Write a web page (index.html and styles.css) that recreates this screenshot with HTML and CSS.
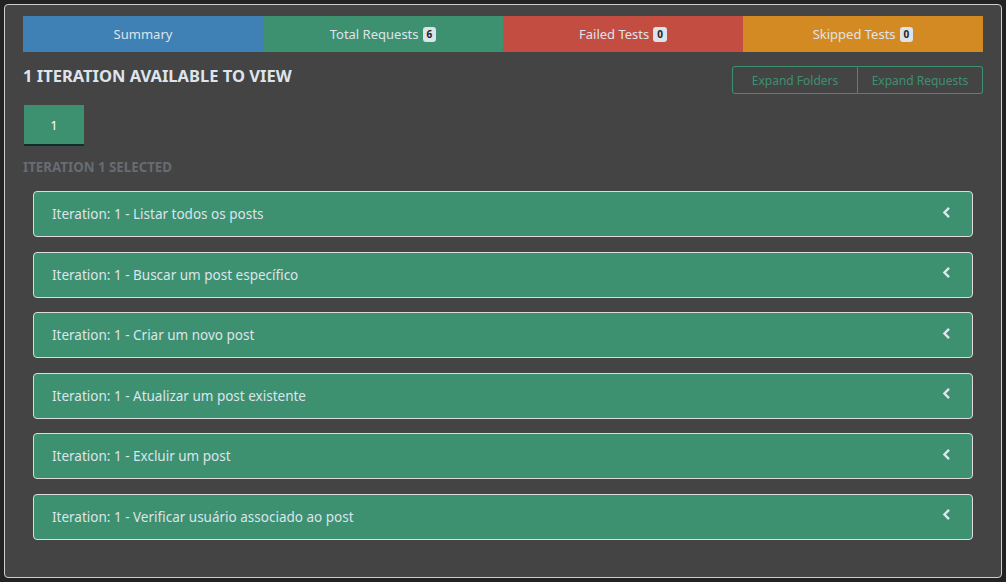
FILE: index.html
```html
<!DOCTYPE html>
<html>
<head>
<meta charset="utf-8">
<link rel="stylesheet" href="styles.css">
</head>
<body>
<div class="card">
  <div class="tabs">
    <div class="tab tab-blue">Summary</div>
    <div class="tab tab-green">Total Requests <span class="badge">6</span></div>
    <div class="tab tab-red">Failed Tests <span class="badge">0</span></div>
    <div class="tab tab-orange">Skipped Tests <span class="badge">0</span></div>
  </div>
  <div class="header">
    <h1 class="title">1 ITERATION AVAILABLE TO VIEW</h1>
    <div class="btn-group">
      <button class="btn">Expand Folders</button>
      <button class="btn">Expand Requests</button>
    </div>
  </div>
  <div class="iter-tabs">
    <div class="iter-tab">1</div>
  </div>
  <div class="selected">ITERATION 1 SELECTED</div>
  <div class="rows">
    <div class="row"><span>Iteration: 1 - Listar todos os posts</span><svg class="chev" viewBox="0 0 9 13" width="9" height="13"><path d="M7 1.8 L2.4 6.5 L7 11.2" fill="none" stroke="#dfe6ee" stroke-width="2.4"/></svg></div>
    <div class="row"><span>Iteration: 1 - Buscar um post específico</span><svg class="chev" viewBox="0 0 9 13" width="9" height="13"><path d="M7 1.8 L2.4 6.5 L7 11.2" fill="none" stroke="#dfe6ee" stroke-width="2.4"/></svg></div>
    <div class="row"><span>Iteration: 1 - Criar um novo post</span><svg class="chev" viewBox="0 0 9 13" width="9" height="13"><path d="M7 1.8 L2.4 6.5 L7 11.2" fill="none" stroke="#dfe6ee" stroke-width="2.4"/></svg></div>
    <div class="row"><span>Iteration: 1 - Atualizar um post existente</span><svg class="chev" viewBox="0 0 9 13" width="9" height="13"><path d="M7 1.8 L2.4 6.5 L7 11.2" fill="none" stroke="#dfe6ee" stroke-width="2.4"/></svg></div>
    <div class="row"><span>Iteration: 1 - Excluir um post</span><svg class="chev" viewBox="0 0 9 13" width="9" height="13"><path d="M7 1.8 L2.4 6.5 L7 11.2" fill="none" stroke="#dfe6ee" stroke-width="2.4"/></svg></div>
    <div class="row"><span>Iteration: 1 - Verificar usuário associado ao post</span><svg class="chev" viewBox="0 0 9 13" width="9" height="13"><path d="M7 1.8 L2.4 6.5 L7 11.2" fill="none" stroke="#dfe6ee" stroke-width="2.4"/></svg></div>
  </div>
</div>
</body>
</html>
```
FILE: styles.css
```css
* { box-sizing: border-box; }
html, body { margin: 0; padding: 0; }
body {
  background: #222222;
  font-family: "Noto Sans", "Open Sans", sans-serif;
  width: 1006px;
  height: 582px;
  overflow: hidden;
}
.card {
  margin: 4px;
  height: 574px;
  border: 1px solid #cfcfcf;
  border-radius: 4px;
  background: #444444;
  padding: 11px 18px 0 18px;
}
.tabs {
  display: flex;
  height: 36px;
}
.tab {
  flex: 1;
  display: flex;
  align-items: center;
  justify-content: center;
  color: #dde4ec;
  font-size: 13px;
  gap: 4px;
}
.tab-blue { background: #3f80b5; }
.tab-green { background: #3d9170; }
.tab-red { background: #c44d41; }
.tab-orange { background: #d38a22; }
.badge {
  background: #dde3ea;
  color: #222;
  font-size: 10px;
  font-weight: 700;
  border-radius: 3px;
  padding: 0 4px;
  line-height: 15px;
  height: 15px;
  margin-top: 1px;
}
.header {
  display: flex;
  justify-content: space-between;
  align-items: flex-start;
  margin-top: 14px;
}
.title {
  margin: 0;
  font-size: 16.5px;
  font-weight: 700;
  color: #dfe4ec;
  line-height: 20px;
}
.btn-group {
  display: flex;
}
.btn {
  font-family: inherit;
  background: transparent;
  border: 1px solid #3d9170;
  color: #3d9170;
  font-size: 12px;
  height: 28px;
  padding: 0;
  margin: 0;
  white-space: nowrap;
}
.btn:first-child { border-radius: 3px 0 0 3px; width: 126px; }
.btn:last-child { border-radius: 0 3px 3px 0; border-left: none; width: 125px; }
.iter-tabs {
  display: flex;
  margin-top: 11px;
  padding-left: 1px;
}
.iter-tab {
  width: 60px;
  height: 41px;
  background: #3d9170;
  color: #ffffff;
  font-size: 13px;
  display: flex;
  align-items: center;
  justify-content: center;
  border-bottom: 2px solid #0d2e2a;
}
.selected {
  margin-top: 13px;
  font-size: 13.3px;
  font-weight: 700;
  color: #666c72;
  line-height: 16px;
}
.rows {
  margin: 16px 10px 0 10px;
  display: flex;
  flex-direction: column;
  gap: 14.6px;
}
.row {
  height: 46px;
  background: #3d9170;
  border: 1px solid #dcdcdc;
  border-radius: 4px;
  display: flex;
  align-items: center;
  justify-content: space-between;
  padding: 0 21px 0 18px;
  color: #dce4ec;
  font-size: 13.5px;
}
.chev { margin-top: -4px; }
```
